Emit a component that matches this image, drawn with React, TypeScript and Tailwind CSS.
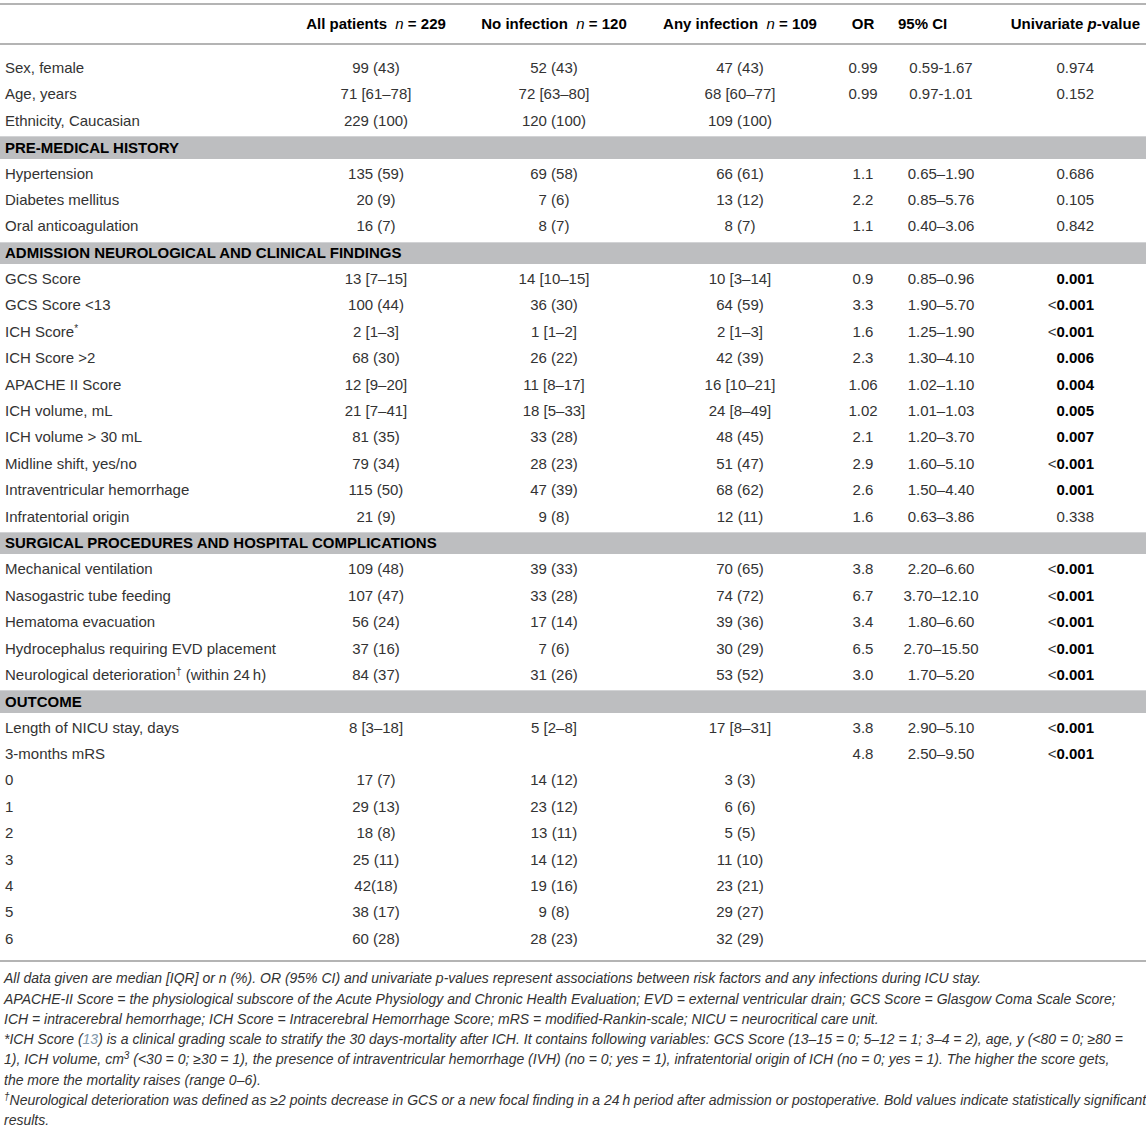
const cols = 'grid grid-cols-[290px_172px_184px_188px_58px_98px_156px]'

type Row = {
  label: React.ReactNode
  all?: string
  no?: string
  any?: string
  or?: string
  ci?: string
  p?: string
  bold?: boolean
}

type Item = { band: string } | Row

const rows: Item[] = [
  { label: 'Sex, female', all: '99 (43)', no: '52 (43)', any: '47 (43)', or: '0.99', ci: '0.59-1.67', p: '0.974' },
  { label: 'Age, years', all: '71 [61–78]', no: '72 [63–80]', any: '68 [60–77]', or: '0.99', ci: '0.97-1.01', p: '0.152' },
  { label: 'Ethnicity, Caucasian', all: '229 (100)', no: '120 (100)', any: '109 (100)' },
  { band: 'PRE-MEDICAL HISTORY' },
  { label: 'Hypertension', all: '135 (59)', no: '69 (58)', any: '66 (61)', or: '1.1', ci: '0.65–1.90', p: '0.686' },
  { label: 'Diabetes mellitus', all: '20 (9)', no: '7 (6)', any: '13 (12)', or: '2.2', ci: '0.85–5.76', p: '0.105' },
  { label: 'Oral anticoagulation', all: '16 (7)', no: '8 (7)', any: '8 (7)', or: '1.1', ci: '0.40–3.06', p: '0.842' },
  { band: 'ADMISSION NEUROLOGICAL AND CLINICAL FINDINGS' },
  { label: 'GCS Score', all: '13 [7–15]', no: '14 [10–15]', any: '10 [3–14]', or: '0.9', ci: '0.85–0.96', p: '0.001', bold: true },
  { label: 'GCS Score <13', all: '100 (44)', no: '36 (30)', any: '64 (59)', or: '3.3', ci: '1.90–5.70', p: '<0.001', bold: true },
  { label: <>ICH Score<sup className="text-[10px]">*</sup></>, all: '2 [1–3]', no: '1 [1–2]', any: '2 [1–3]', or: '1.6', ci: '1.25–1.90', p: '<0.001', bold: true },
  { label: 'ICH Score >2', all: '68 (30)', no: '26 (22)', any: '42 (39)', or: '2.3', ci: '1.30–4.10', p: '0.006', bold: true },
  { label: 'APACHE II Score', all: '12 [9–20]', no: '11 [8–17]', any: '16 [10–21]', or: '1.06', ci: '1.02–1.10', p: '0.004', bold: true },
  { label: 'ICH volume, mL', all: '21 [7–41]', no: '18 [5–33]', any: '24 [8–49]', or: '1.02', ci: '1.01–1.03', p: '0.005', bold: true },
  { label: 'ICH volume > 30 mL', all: '81 (35)', no: '33 (28)', any: '48 (45)', or: '2.1', ci: '1.20–3.70', p: '0.007', bold: true },
  { label: 'Midline shift, yes/no', all: '79 (34)', no: '28 (23)', any: '51 (47)', or: '2.9', ci: '1.60–5.10', p: '<0.001', bold: true },
  { label: 'Intraventricular hemorrhage', all: '115 (50)', no: '47 (39)', any: '68 (62)', or: '2.6', ci: '1.50–4.40', p: '0.001', bold: true },
  { label: 'Infratentorial origin', all: '21 (9)', no: '9 (8)', any: '12 (11)', or: '1.6', ci: '0.63–3.86', p: '0.338' },
  { band: 'SURGICAL PROCEDURES AND HOSPITAL COMPLICATIONS' },
  { label: 'Mechanical ventilation', all: '109 (48)', no: '39 (33)', any: '70 (65)', or: '3.8', ci: '2.20–6.60', p: '<0.001', bold: true },
  { label: 'Nasogastric tube feeding', all: '107 (47)', no: '33 (28)', any: '74 (72)', or: '6.7', ci: '3.70–12.10', p: '<0.001', bold: true },
  { label: 'Hematoma evacuation', all: '56 (24)', no: '17 (14)', any: '39 (36)', or: '3.4', ci: '1.80–6.60', p: '<0.001', bold: true },
  { label: 'Hydrocephalus requiring EVD placement', all: '37 (16)', no: '7 (6)', any: '30 (29)', or: '6.5', ci: '2.70–15.50', p: '<0.001', bold: true },
  {
    label: <>Neurological deterioration<sup className="text-[10px]">†</sup> (within 24&#8201;h)</>,
    all: '84 (37)', no: '31 (26)', any: '53 (52)', or: '3.0', ci: '1.70–5.20', p: '<0.001', bold: true,
  },
  { band: 'OUTCOME' },
  { label: 'Length of NICU stay, days', all: '8 [3–18]', no: '5 [2–8]', any: '17 [8–31]', or: '3.8', ci: '2.90–5.10', p: '<0.001', bold: true },
  { label: '3-months mRS', or: '4.8', ci: '2.50–9.50', p: '<0.001', bold: true },
  { label: '0', all: '17 (7)', no: '14 (12)', any: '3 (3)' },
  { label: '1', all: '29 (13)', no: '23 (12)', any: '6 (6)' },
  { label: '2', all: '18 (8)', no: '13 (11)', any: '5 (5)' },
  { label: '3', all: '25 (11)', no: '14 (12)', any: '11 (10)' },
  { label: '4', all: '42(18)', no: '19 (16)', any: '23 (21)' },
  { label: '5', all: '38 (17)', no: '9 (8)', any: '29 (27)' },
  { label: '6', all: '60 (28)', no: '28 (23)', any: '32 (29)' },
]

function PValue({ p, bold }: { p?: string; bold?: boolean }) {
  if (!p) return null
  if (!bold) return <span>{p}</span>
  if (p.startsWith('<')) {
    return (
      <span>
        &lt;<b className="font-bold text-black">{p.slice(1)}</b>
      </span>
    )
  }
  return <b className="font-bold text-black">{p}</b>
}

export default function App() {
  return (
    <main className="w-[1146px] min-h-[1127px] bg-white pt-[3px] font-['Liberation_Sans',Arial,sans-serif] text-[15px] text-[#333]">
      {/* header */}
      <div className={`${cols} h-[42px] items-center border-y-2 border-[#b4b4b4] font-bold text-black whitespace-nowrap`}>
        <div />
        <div className="text-center">
          All patients&nbsp; <i className="font-normal">n</i> = 229
        </div>
        <div className="text-center">
          No infection&nbsp; <i className="font-normal">n</i> = 120
        </div>
        <div className="text-center">
          Any infection&nbsp; <i className="font-normal">n</i> = 109
        </div>
        <div className="text-center">OR</div>
        <div className="pl-[6px]">95% CI</div>
        <div className="flex justify-end pr-[6px]">
          <span>
            Univariate <i>p</i>-value
          </span>
        </div>
      </div>

      {/* body */}
      <div className="pt-[10px] pb-[8px]">
        {rows.map((r, i) =>
          'band' in r ? (
            <div key={i} className="h-[26.4px] py-[2px]">
              <div className="h-full bg-[#bdbec0] border-t border-[#d2d3d5] flex items-center pl-[5px] font-bold text-black">
                {r.band}
              </div>
            </div>
          ) : (
            <div key={i} className={`${cols} h-[26.4px] items-center whitespace-nowrap`}>
              <div className="pl-[5px]">{r.label}</div>
              <div className="text-center">{r.all}</div>
              <div className="text-center">{r.no}</div>
              <div className="text-center">{r.any}</div>
              <div className="text-center">{r.or}</div>
              <div className="text-center">{r.ci}</div>
              <div className="text-right pr-[52px]">
                <PValue p={r.p} bold={r.bold} />
              </div>
            </div>
          ),
        )}
      </div>

      {/* footnotes */}
      <div className="border-t-2 border-[#b4b4b4] pt-[6px] pl-[4px] italic text-[14px] leading-[20.3px] text-[#333] whitespace-nowrap">
        <p>
          All data given are median [IQR] or n (%). OR (95% CI) and univariate p-values represent associations between
          risk factors and any infections during ICU stay.
        </p>
        <p>
          APACHE-II Score = the physiological subscore of the Acute Physiology and Chronic Health Evaluation; EVD =
          external ventricular drain; GCS Score = Glasgow Coma Scale Score;
          <br />
          ICH = intracerebral hemorrhage; ICH Score = Intracerebral Hemorrhage Score; mRS = modified-Rankin-scale; NICU
          = neurocritical care unit.
        </p>
        <p>
          *ICH Score (<span className="text-[#7d95a8]">13</span>) is a clinical grading scale to stratify the 30
          days-mortality after ICH. It contains following variables: GCS Score (13–15 = 0; 5–12 = 1; 3–4 = 2), age, y
          (&lt;80 = 0; ≥80 =
          <br />
          1), ICH volume, cm<sup className="text-[10px]">3</sup> (&lt;30 = 0; ≥30 = 1), the presence of intraventricular
          hemorrhage (IVH) (no = 0; yes = 1), infratentorial origin of ICH (no = 0; yes = 1). The higher the score gets,
          <br />
          the more the mortality raises (range 0–6).
        </p>
        <p>
          <sup className="text-[10px]">†</sup>Neurological deterioration was defined as ≥2 points decrease in GCS or a
          new focal finding in a 24&#8201;h period after admission or postoperative. Bold values indicate statistically
          significant
          <br />
          results.
        </p>
      </div>
    </main>
  )
}
